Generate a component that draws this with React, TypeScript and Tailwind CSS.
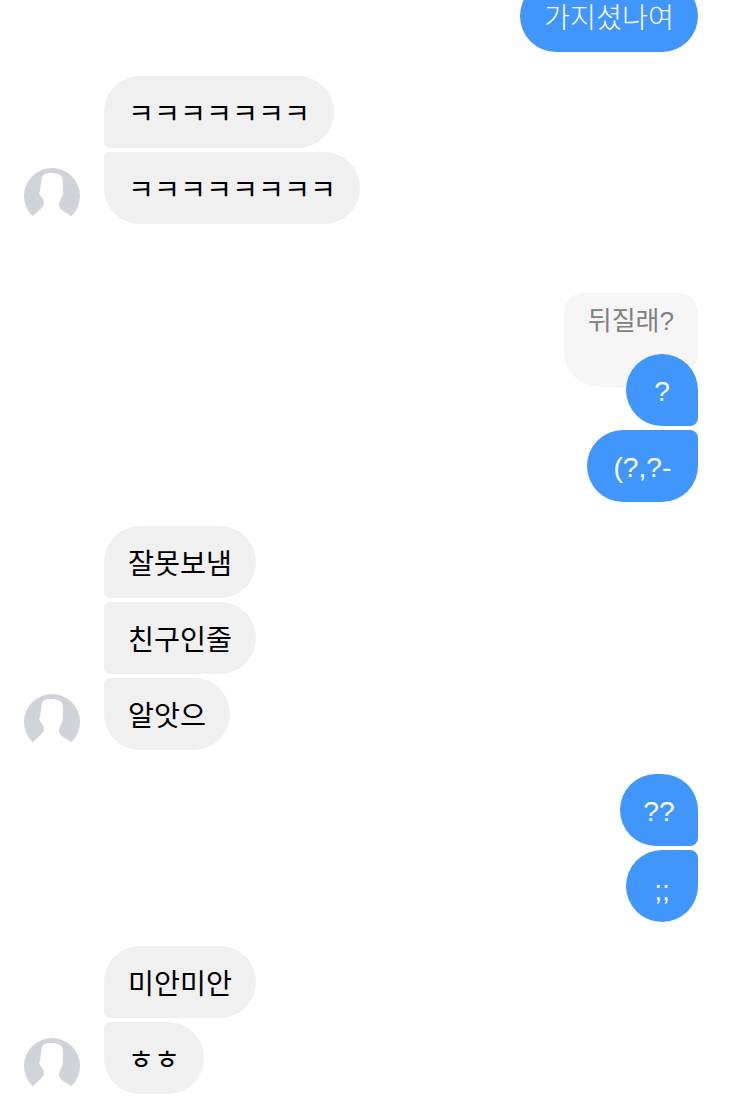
const font = "font-['Liberation_Sans','Noto_Sans_CJK_KR',sans-serif]";

function Avatar() {
  return (
    <svg viewBox="0 0 56 56" className="h-14 w-14 shrink-0">
      <circle cx="28" cy="28" r="28" fill="#d1d3da" />
      <path
        d="M27 5C22 5 19 6 18 9C17 13 17 18 16 23C15 25 15 26 16 27C18 30 20 32 20 35C20 39 14 43 9 48L0 56L56 56L47 48C42 44 35 42 35 37C35 33 38 30 39 25C38 23 39 21 39 20C39 16 39 12 38 9C36 6 32 5 27 5Z"
        fill="#fff"
      />
    </svg>
  );
}

function Left({ text, className }: { text: string; className: string }) {
  return (
    <div className={`flex h-[72px] w-fit items-center bg-[#f0f0f1] px-6 pt-1 text-[28.26px] leading-[32px] text-black ${className}`}>
      {text}
    </div>
  );
}

function Right({ text, className }: { text: string; className: string }) {
  return (
    <div className={`relative flex h-[72px] min-w-[72px] items-center justify-center bg-[#4096fa] text-[28.26px] leading-[32px] font-light text-white ${className}`}>
      {text}
    </div>
  );
}

export default function App() {
  return (
    <div className={`h-[1102px] w-[750px] overflow-hidden bg-white ${font}`}>
      <div className="mt-[-20px] flex flex-col items-end pr-[52px]">
        <Right text="가지셨나여" className="rounded-[36px] px-6 pt-1" />
      </div>

      <div className="mt-6 flex items-end gap-6 pl-6">
        <Avatar />
        <div className="flex flex-col gap-1">
          <Left text="ㅋㅋㅋㅋㅋㅋㅋ" className="rounded-[36px] rounded-bl-[6px]" />
          <Left text="ㅋㅋㅋㅋㅋㅋㅋㅋ" className="rounded-[36px] rounded-tl-[6px]" />
        </div>
      </div>

      <div className="mt-[69px] flex flex-col items-end gap-1 pr-[52px]">
        <div className="h-[94px] rounded-[36px] rounded-t-[20px] bg-[#f5f5f5] px-6 pt-[10px] text-[26px] leading-[36px] text-[#808080]">
          뒤질래?
        </div>
        <Right text="?" className="mt-[-37px] rounded-[36px] rounded-br-[8px] pt-0.5" />
        <Right text="(?,?-" className="rounded-[36px] rounded-tr-[8px] px-[26.5px] pt-0.5" />
      </div>

      <div className="mt-6 flex items-end gap-6 pl-6">
        <Avatar />
        <div className="flex flex-col gap-1">
          <Left text="잘못보냄" className="rounded-[36px] rounded-bl-[6px]" />
          <Left text="친구인줄" className="rounded-[36px] rounded-l-[6px]" />
          <Left text="알앗으" className="rounded-[36px] rounded-tl-[6px]" />
        </div>
      </div>

      <div className="mt-6 flex flex-col items-end gap-1 pr-[52px]">
        <Right text="??" className="w-[78px] rounded-[36px] rounded-br-[8px] pt-0.5" />
        <Right text=";;" className="rounded-[36px] rounded-tr-[8px] pt-2" />
      </div>

      <div className="mt-6 flex items-end gap-6 pl-6">
        <Avatar />
        <div className="flex flex-col gap-1">
          <Left text="미안미안" className="rounded-[36px] rounded-bl-[6px]" />
          <Left text="ㅎㅎ" className="rounded-[36px] rounded-tl-[6px]" />
        </div>
      </div>
    </div>
  );
}
